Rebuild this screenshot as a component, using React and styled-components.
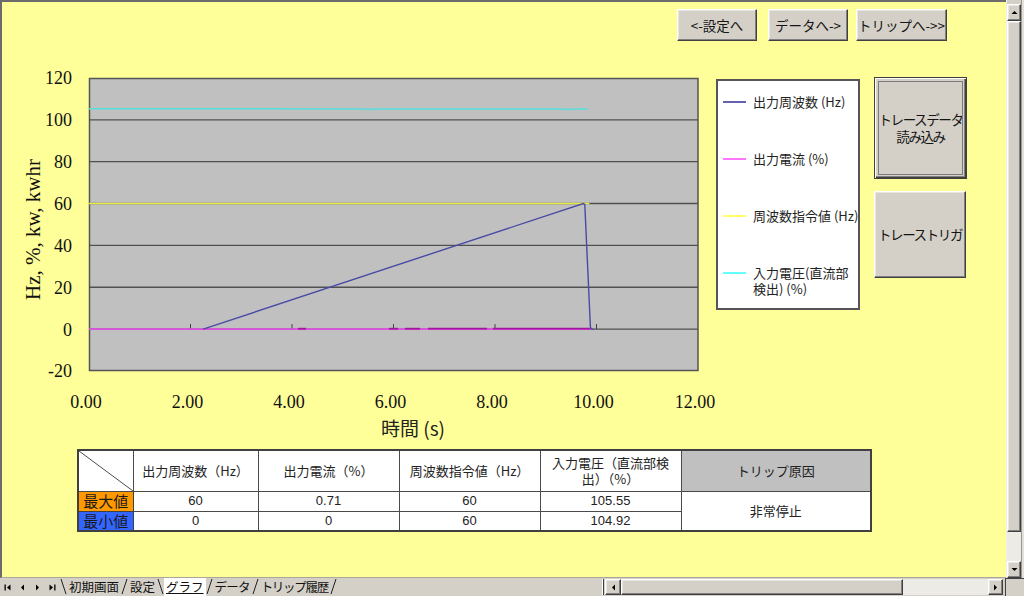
import React from 'react';
import styled, { createGlobalStyle, css } from 'styled-components';

const JP = `"Noto Sans CJK JP", "Noto Sans", sans-serif`;
const SERIF = `"Liberation Serif", "Times New Roman", serif`;

const GlobalStyle = createGlobalStyle`
  html, body {
    margin: 0;
    padding: 0;
  }
  body {
    background: #d4d0c8;
    font-family: ${JP};
    color: #111;
  }
`;

const raised = css`
  box-sizing: border-box;
  border: 1px solid;
  border-color: #ffffff #404040 #404040 #ffffff;
  box-shadow: inset -1px -1px 0 #808080, inset 1px 1px 0 #e8e6e1;
  background: #d4d0c8;
`;

// chart scales (page coordinates)
const X0 = 89;
const PX_S = 50.75;
const Y0 = 329.1;
const PX_V = 2.093;
const xt = (t) => X0 + t * PX_S;
const yv = (v) => Y0 - v * PX_V;
const pts = (arr) => arr.map(([t, v]) => `${xt(t).toFixed(1)},${yv(v).toFixed(1)}`).join(' ');

const cyanData = [
  [0, 105.3], [2.5, 105.3], [5.4, 105.2], [5.5, 104.9], [5.7, 105.2],
  [8.0, 105.2], [9.3, 105.2], [9.4, 104.9], [9.6, 105.1], [9.83, 105.2],
];
const navyData = [[2.25, 0], [9.74, 60], [9.77, 59.6], [9.88, 1], [9.9, 0], [9.94, 0]];
const darkCurrent = [[298, 306], [389, 398], [405, 420], [428, 487], [493, 590]];

const legendItems = [
  { color: '#6262b0', lines: ['出力周波数 (Hz)'] },
  { color: '#ff77ff', lines: ['出力電流 (%)'] },
  { color: '#ffff66', lines: ['周波数指令値 (Hz)'] },
  { color: '#66ffff', lines: ['入力電圧(直流部', '検出) (%)'] },
];

const columns = [55, 125, 141, 141, 141, 190];

const tabs = [
  { label: '初期画面', edge: 'back' },
  { label: '設定', edge: 'fwd' },
  { label: 'グラフ', edge: 'back', active: true },
  { label: 'データ', edge: 'fwd', ls: -0.8 },
  { label: 'トリップ履歴', edge: 'fwd', ls: -1.3 },
];

const Window = styled.div`
  width: 1024px;
  height: 596px;
  display: flex;
  flex-direction: column;
  overflow: hidden;
  background: #d4d0c8;
`;

const Upper = styled.div`
  display: flex;
  height: 578px;
`;

const Sheet = styled.div`
  box-sizing: border-box;
  width: 1007px;
  height: 578px;
  background: #ffff99;
  border-top: 2px solid #6b6b6b;
  border-left: 2px solid #6b6b6b;
  border-bottom: 1px solid #a9a89a;
  display: flex;
  flex-direction: column;
`;

const TopNav = styled.div`
  display: flex;
  justify-content: flex-end;
  padding: 7px 59px 0 0;
  height: 32px;
`;

const NavButton = styled.button`
  ${raised};
  width: ${(p) => p.$w}px;
  height: 32px;
  margin-left: ${(p) => p.$ml || 0}px;
  padding: 0;
  font-family: ${JP};
  font-size: 13.5px;
  color: #151515;
  white-space: nowrap;
`;

const MainRow = styled.div`
  display: flex;
  align-items: flex-start;
  margin-top: 19px;
`;

const ChartSvg = styled.svg`
  display: block;
  flex-shrink: 0;
  overflow: visible;
`;

const TickText = styled.text`
  font-family: ${SERIF};
  font-size: 18px;
  fill: #111;
`;

const AxisTitle = styled.text`
  font-family: ${SERIF};
  font-size: 21px;
  fill: #111;
`;

const TimeTitle = styled.text`
  font-family: ${JP};
  font-size: 19px;
  fill: #222;
`;

const Legend = styled.div`
  box-sizing: border-box;
  width: 144px;
  height: 231px;
  margin: 19px 0 0 16px;
  padding: 13px 0 0 5px;
  background: #fff;
  border: 2px solid #555;
  display: flex;
  flex-direction: column;
  gap: 41px;
`;

const LegendItem = styled.div`
  display: flex;
  align-items: flex-start;
  font-size: 13px;
  line-height: 16px;
  color: #222;
`;

const Swatch = styled.span`
  flex-shrink: 0;
  width: 23px;
  height: 2px;
  margin: 7px 7px 0 0;
  background: ${(p) => p.$color};
`;

const LegendText = styled.span`
  display: flex;
  flex-direction: column;
  white-space: nowrap;
`;

const SideButtons = styled.div`
  display: flex;
  flex-direction: column;
  gap: 12px;
  margin: 17px 0 0 14px;
`;

const SideButton = styled.button`
  ${raised};
  position: relative;
  width: ${(p) => p.$w}px;
  height: ${(p) => p.$h}px;
  padding: 0;
  font-family: ${JP};
  font-size: 13.5px;
  letter-spacing: -1.4px;
  line-height: 17px;
  color: #151515;
  white-space: nowrap;

  ${(p) =>
    p.$default &&
    css`
      border-color: #404040;
      box-shadow: inset 1px 1px 0 #ffffff, inset -1px -1px 0 #404040, inset -2px -2px 0 #808080;

      &::after {
        content: '';
        position: absolute;
        inset: 3px;
        border: 1px solid #7c7c7c;
      }
    `}
`;

const Summary = styled.table`
  margin: 4px 0 0 75px;
  width: 793px;
  border-collapse: collapse;
  table-layout: fixed;
  border: 2px solid #404040;
  background: #fff;
  font-family: ${JP};
  font-size: 13px;
  color: #222;
`;

const Col = styled.col`
  width: ${(p) => p.$w}px;
`;

const HeadRow = styled.tr`
  height: 41px;
`;

const BodyRow = styled.tr`
  height: 20px;
`;

const HeadCell = styled.th`
  border: 1px solid #4a4a4a;
  padding: 0 2px;
  font-weight: normal;
  line-height: 16px;
  background: ${(p) => p.$bg || '#fff'};
  ${(p) =>
    p.$diag &&
    css`
      background: linear-gradient(
        to top right,
        transparent calc(50% - 0.8px),
        #4a4a4a 50%,
        transparent calc(50% + 0.8px)
      );
    `}
`;

const RowHead = styled.td`
  border: 1px solid #404040;
  padding: 0;
  text-align: center;
  font-size: 15px;
  line-height: 18px;
  white-space: nowrap;
  color: #1a1a1a;
  background: ${(p) => p.$bg};
`;

const Cell = styled.td`
  border: 1px solid #4a4a4a;
  padding: 0;
  text-align: center;
  font-family: "Liberation Sans", ${JP};
  font-size: 13px;
  line-height: 18px;
`;

const CauseCell = styled.td`
  border: 1px solid #4a4a4a;
  text-align: center;
  font-size: 13px;
`;

const VScroll = styled.div`
  box-sizing: border-box;
  width: 15px;
  padding-top: 4px;
  display: flex;
  flex-direction: column;
  background: #d4d0c8;
  border-left: 1px solid #f0efea;
`;

const ArrowBox = styled.div`
  ${raised};
  flex-shrink: 0;
  width: ${(p) => (p.$w ? `${p.$w}px` : 'auto')};
  height: ${(p) => (p.$h ? `${p.$h}px` : 'auto')};
  display: flex;
  align-items: center;
  justify-content: center;
`;

const Thumb = styled.div`
  ${raised};
  flex: ${(p) => (p.$w ? `0 0 ${p.$w}px` : '1')};
`;

const Track = styled.div`
  flex: ${(p) => (p.$size ? `0 0 ${p.$size}px` : '1')};
  background: #ecebe6;
`;

const RightEdge = styled.div`
  width: 2px;
  background: #e2e0da;
  border-left: 1px solid #9a9890;
`;

const TabBar = styled.div`
  display: flex;
  height: 18px;
  background: #d4d0c8;
`;

const NavGroup = styled.div`
  display: flex;
  width: 60px;
  flex-shrink: 0;
`;

const NavCell = styled.div`
  width: 15px;
  display: flex;
  align-items: center;
  justify-content: center;
`;

const Tabs = styled.div`
  display: flex;
  align-items: stretch;
  font-size: 12.5px;
  color: #111;
`;

const TabLabel = styled.span`
  display: flex;
  align-items: center;
  padding: 0 2px;
  line-height: 1;
  white-space: nowrap;
  letter-spacing: ${(p) => p.$ls || 0}px;
  background: ${(p) => (p.$active ? '#ffffff' : 'transparent')};
  text-decoration: ${(p) => (p.$active ? 'underline' : 'none')};
`;

const EdgeSvg = styled.svg`
  display: block;
  flex-shrink: 0;
`;

const Spacer = styled.div`
  flex: 1;
`;

const HScroll = styled.div`
  display: flex;
  width: 402px;
  height: 16px;
  margin-top: 1px;
`;

const Splitter = styled.div`
  width: 1px;
  margin: 0 1px;
  background: #404040;
  border-left: 1px solid #fff;
`;

const Corner = styled.div`
  box-sizing: border-box;
  width: 19px;
  margin-left: 2px;
  border-left: 1px solid #404040;
  border-top: 1px solid #404040;
  background: #d4d0c8;
`;

const Tri = ({ dir }) => {
  const d = {
    up: 'M0.5 5 L3.5 2 L6.5 5 Z',
    down: 'M0.5 2 L3.5 5 L6.5 2 Z',
    left: 'M5 0.5 L2 3.5 L5 6.5 Z',
    right: 'M2 0.5 L5 3.5 L2 6.5 Z',
    first: 'M6.5 0.5 L3 3.5 L6.5 6.5 Z M0.5 0.5 H1.8 V6.5 H0.5 Z',
    last: 'M0.5 0.5 L4 3.5 L0.5 6.5 Z M5.2 0.5 H6.5 V6.5 H5.2 Z',
  }[dir];
  return (
    <svg width="7" height="7" viewBox="0 0 7 7">
      <path d={d} fill="#000" />
    </svg>
  );
};

const TabEdge = ({ back }) => (
  <EdgeSvg width="7" height="18" viewBox="0 0 7 18">
    <line x1={back ? 1 : 6} y1="1" x2={back ? 6 : 1} y2="16" stroke="#202020" strokeWidth="1" />
  </EdgeSvg>
);

const Chart = () => (
  <ChartSvg width="698" height="385" viewBox="2 60 698 385">
    <rect x="89.5" y="78.5" width="608.5" height="292" fill="#c0c0c0" stroke="#555" strokeWidth="1.5" />
    {[100, 80, 60, 40, 20, 0].map((v) => (
      <line key={v} x1="89" x2="698" y1={yv(v)} y2={yv(v)} stroke="#505050" strokeWidth="1.3" />
    ))}
    {[2, 4, 6, 8, 10].map((t) => (
      <line key={t} x1={xt(t)} x2={xt(t)} y1={yv(0) - 5} y2={yv(0)} stroke="#404040" strokeWidth="1" />
    ))}
    <polyline points={pts(cyanData)} fill="none" stroke="#56dede" strokeWidth="1.5" />
    <line x1="89" x2={xt(9.86)} y1={yv(60)} y2={yv(60)} stroke="#eaea48" strokeWidth="1.4" />
    <line x1="89" x2={xt(9.9)} y1={yv(0)} y2={yv(0)} stroke="#e050e0" strokeWidth="1.8" />
    {darkCurrent.map(([a, b]) => (
      <line key={a} x1={a} x2={b} y1={yv(0) - 0.4} y2={yv(0) - 0.4} stroke="#a018a0" strokeWidth="1.8" />
    ))}
    <polyline points={pts(navyData)} fill="none" stroke="#4a4aa6" strokeWidth="1.4" />

    {[120, 100, 80, 60, 40, 20, 0, -20].map((v) => (
      <TickText key={v} x="72" y={yv(v) + 6.5} textAnchor="end">
        {v}
      </TickText>
    ))}
    {[0, 2, 4, 6, 8, 10, 12].map((t) => (
      <TickText key={t} x={xt(t) - 3} y="408" textAnchor="middle">
        {t.toFixed(2)}
      </TickText>
    ))}
    <AxisTitle x="40" y="229.5" textAnchor="middle" transform="rotate(-90 40 229.5)">
      Hz, %, kw, kwhr
    </AxisTitle>
    <TimeTitle x="381" y="436">
      時間 (s)
    </TimeTitle>
  </ChartSvg>
);

const SummaryTable = () => (
  <Summary>
    <colgroup>
      {columns.map((w, i) => (
        <Col key={i} $w={w} />
      ))}
    </colgroup>
    <tbody>
      <HeadRow>
        <HeadCell $diag />
        <HeadCell>出力周波数（Hz）</HeadCell>
        <HeadCell>出力電流（%）</HeadCell>
        <HeadCell>周波数指令値（Hz）</HeadCell>
        <HeadCell>入力電圧（直流部検出）（%）</HeadCell>
        <HeadCell $bg="#c0c0c0">トリップ原因</HeadCell>
      </HeadRow>
      <BodyRow>
        <RowHead $bg="#ff9900">最大値</RowHead>
        <Cell>60</Cell>
        <Cell>0.71</Cell>
        <Cell>60</Cell>
        <Cell>105.55</Cell>
        <CauseCell rowSpan={2}>非常停止</CauseCell>
      </BodyRow>
      <BodyRow>
        <RowHead $bg="#3366ff">最小値</RowHead>
        <Cell>0</Cell>
        <Cell>0</Cell>
        <Cell>60</Cell>
        <Cell>104.92</Cell>
      </BodyRow>
    </tbody>
  </Summary>
);

export default function App() {
  return (
    <>
      <GlobalStyle />
      <Window>
        <Upper>
          <Sheet>
            <TopNav>
              <NavButton $w={80}>&lt;-設定へ</NavButton>
              <NavButton $w={80} $ml={11}>データへ-&gt;</NavButton>
              <NavButton $w={91} $ml={8}>トリップへ-&gt;&gt;</NavButton>
            </TopNav>
            <MainRow>
              <Chart />
              <Legend>
                {legendItems.map((item) => (
                  <LegendItem key={item.lines[0]}>
                    <Swatch $color={item.color} />
                    <LegendText>
                      {item.lines.map((line) => (
                        <span key={line}>{line}</span>
                      ))}
                    </LegendText>
                  </LegendItem>
                ))}
              </Legend>
              <SideButtons>
                <SideButton $w={93} $h={102} $default>
                  トレースデータ
                  <br />
                  読み込み
                </SideButton>
                <SideButton $w={92} $h={87}>
                  トレーストリガ
                </SideButton>
              </SideButtons>
            </MainRow>
            <SummaryTable />
          </Sheet>
          <VScroll>
            <ArrowBox $h={17}>
              <Tri dir="up" />
            </ArrowBox>
            <Thumb />
            <Track $size={29} />
            <ArrowBox $h={17}>
              <Tri dir="down" />
            </ArrowBox>
          </VScroll>
          <RightEdge />
        </Upper>
        <TabBar>
          <NavGroup>
            <NavCell><Tri dir="first" /></NavCell>
            <NavCell><Tri dir="left" /></NavCell>
            <NavCell><Tri dir="right" /></NavCell>
            <NavCell><Tri dir="last" /></NavCell>
          </NavGroup>
          <Tabs>
            {tabs.map((tab) => (
              <React.Fragment key={tab.label}>
                <TabEdge back={tab.edge === 'back'} />
                <TabLabel $active={tab.active} $ls={tab.ls}>
                  {tab.label}
                </TabLabel>
              </React.Fragment>
            ))}
            <TabEdge />
          </Tabs>
          <Spacer />
          <HScroll>
            <Splitter />
            <ArrowBox $w={16}>
              <Tri dir="left" />
            </ArrowBox>
            <Thumb $w={282} />
            <Track />
            <ArrowBox $w={15}>
              <Tri dir="right" />
            </ArrowBox>
          </HScroll>
          <Corner />
        </TabBar>
      </Window>
    </>
  );
}
